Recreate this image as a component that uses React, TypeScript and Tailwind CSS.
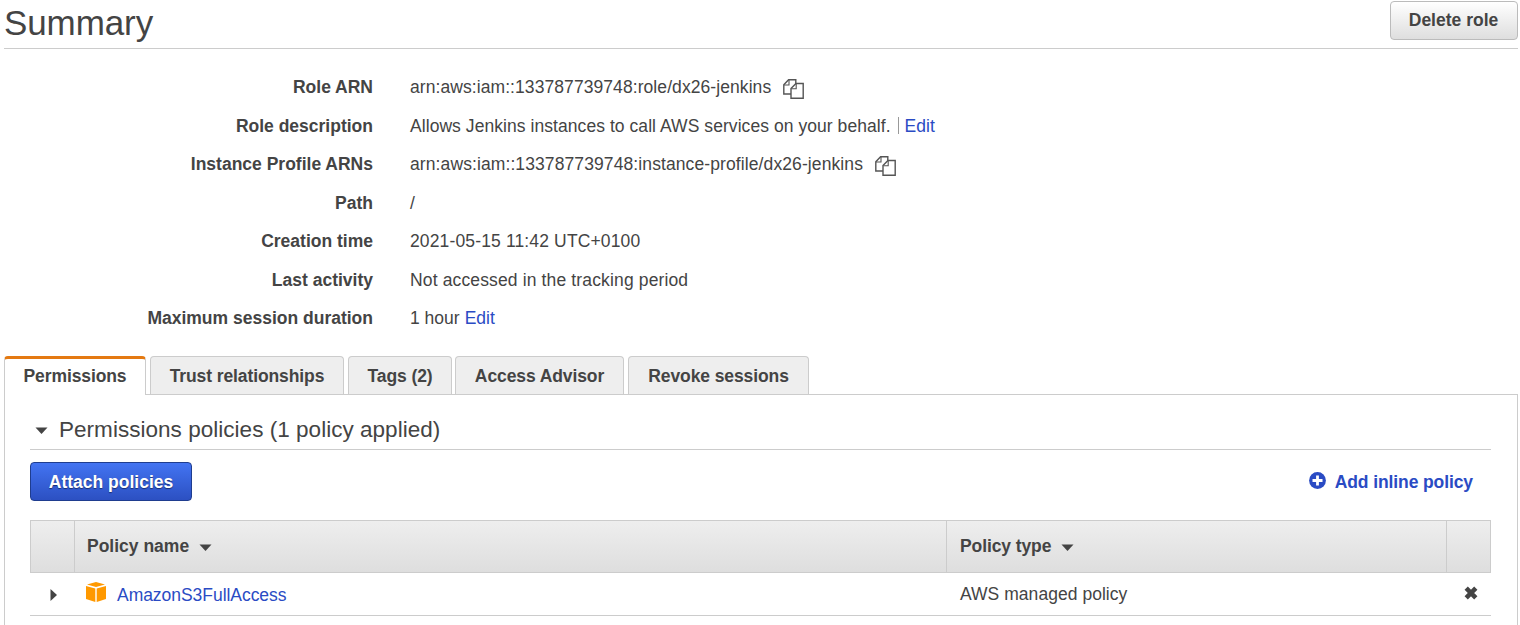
import type { ReactNode } from 'react';

const CopyIcon = () => (
  <svg width="21" height="20" viewBox="0 0 21 20" fill="white" stroke="#555" strokeWidth="1.4" className="relative top-[1.5px] ml-3 shrink-0">
    <path d="M0.8 5.8L5.6 0.8H12.8V15H0.8Z" />
    <path d="M1 6H6V1" fill="none" strokeWidth="1.1" />
    <path d="M8 9.6L13 4.5H20.2V19.2H8Z" />
    <path d="M8.2 9.8H13.2V4.8" fill="none" strokeWidth="1.1" />
  </svg>
);

const Caret = ({ className }: { className: string }) => (
  <svg width="13" height="7" viewBox="0 0 13 7" fill="#444" className={className}>
    <path d="M0.5 0.5H12.5L6.5 7Z" />
  </svg>
);

const Row = ({ label, children }: { label: string; children: ReactNode }) => (
  <div className="flex h-[38.5px] items-center">
    <dt className="w-[373px] shrink-0 text-right font-bold">{label}</dt>
    <dd className="ml-[37px] flex items-center">{children}</dd>
  </div>
);

const tabs = [
  { label: 'Trust relationships', box: 'ml-1 w-[194px]' },
  { label: 'Tags (2)', box: 'ml-1 w-[104px]' },
  { label: 'Access Advisor', box: 'ml-[3px] w-[169px]' },
  { label: 'Revoke sessions', box: 'ml-1 w-[181px]' },
];

export default function App() {
  return (
    <div className="h-[625px] w-[1520px] overflow-hidden bg-white font-['Liberation_Sans',Arial,sans-serif] text-[17.5px] leading-[22px] whitespace-nowrap text-[#444]">
      <header className="ml-1 flex h-[49px] w-[1514px] items-start justify-between border-b border-[#ccc]">
        <h1 className="text-[35px] leading-[45px] tracking-[-0.1px]">Summary</h1>
        <button className="mt-px flex h-[39px] w-[128px] items-center justify-center rounded-[4px] border border-[#bbb] bg-linear-to-b from-white to-[#dedede] pr-px pb-[2px] font-bold">
          Delete role
        </button>
      </header>

      <dl className="mt-[19px]">
        <Row label="Role ARN">
          <span className="tracking-[0.075px]">arn:aws:iam::133787739748:role/dx26-jenkins</span>
          <CopyIcon />
        </Row>
        <Row label="Role description">
          <span className="tracking-[0.06px]">Allows Jenkins instances to call AWS services on your behalf.</span>
          <span className="ml-[7px] h-[17px] w-px bg-[#999]" />
          <a className="ml-[6px] text-[#2a4bc4]">Edit</a>
        </Row>
        <Row label="Instance Profile ARNs">
          <span className="tracking-[0.1px]">arn:aws:iam::133787739748:instance-profile/dx26-jenkins</span>
          <CopyIcon />
        </Row>
        <Row label="Path"><span>/</span></Row>
        <Row label="Creation time"><span className="tracking-[0.14px]">2021-05-15 11:42 UTC+0100</span></Row>
        <Row label="Last activity"><span className="tracking-[0.14px]">Not accessed in the tracking period</span></Row>
        <Row label="Maximum session duration">
          <span>1 hour</span>
          <a className="ml-[5px] text-[#2a4bc4]">Edit</a>
        </Row>
      </dl>

      <nav className="mt-[18.5px] ml-1 flex h-[38px] font-bold tracking-[-0.1px]">
        <div className="z-10 flex h-[39px] w-[142px] items-center justify-center rounded-t-[4px] border-x border-t-[3px] border-x-[#ccc] border-t-[#e47911] bg-white pb-[2px]">
          Permissions
        </div>
        {tabs.map((t) => (
          <div key={t.label} className={`flex items-center justify-center rounded-t-[4px] border border-b-0 border-[#ccc] bg-[#eee] pt-px ${t.box}`}>
            {t.label}
          </div>
        ))}
      </nav>

      <main className="ml-1 h-[240px] w-[1514px] border border-[#ccc] pr-[26px] pl-[25px]">
        <h2 className="flex h-[55px] items-center border-b border-[#ccc] pt-[15px] text-[22.5px] tracking-[0.03px]">
          <Caret className="relative top-px ml-[5px]" />
          <span className="ml-[11px]">Permissions policies (1 policy applied)</span>
        </h2>
        <div className="mt-3 flex h-[39px] items-center justify-between">
          <button className="flex h-[39px] w-[162px] items-center justify-center rounded-[4px] border border-[#1f3d8f] bg-linear-to-b from-[#4374f2] to-[#2c50c2] font-bold text-white [text-shadow:0_1px_1px_#1a2f70]">
            Attach policies
          </button>
          <a className="mr-[18px] flex items-center font-bold tracking-[-0.1px] text-[#2a4bc4]">
            <svg width="17" height="17" viewBox="0 0 17 17" className="relative -top-px mr-[9px]">
              <circle cx="8.5" cy="8.5" r="8.4" fill="#2a4bc4" />
              <path d="M8.5 3.5V13.5M3.5 8.5H13.5" stroke="white" strokeWidth="2.8" />
            </svg>
            Add inline policy
          </a>
        </div>
        <div className="mt-[19px] grid h-[53px] w-[1461px] grid-cols-[44px_872px_500px_1fr] divide-x divide-[#ccc] border border-[#ccc] bg-linear-to-b from-[#eee] to-[#dedede] font-bold">
          <div />
          <div className="flex items-center pb-[2px] pl-3">
            <span>Policy name</span>
            <Caret className="relative top-[2px] ml-[10px]" />
          </div>
          <div className="flex items-center pb-[2px] pl-[13px] tracking-[-0.1px]">
            <span>Policy type</span>
            <Caret className="relative top-[2px] ml-[10px]" />
          </div>
          <div />
        </div>
        <div className="grid h-[43px] w-[1461px] grid-cols-[45px_872px_500px_1fr] items-center border-b border-[#ccc]">
          <svg width="7" height="12" viewBox="0 0 7 12" fill="#444" className="relative top-px ml-5"><path d="M0.5 0L7 6L0.5 12Z" /></svg>
          <div className="flex items-center pl-[11px]">
            <svg width="20" height="20" viewBox="0 0 20 20" fill="#f90" className="relative -top-[2px]">
              <path d="M10 0L19 2.4L10 5L1 2.4Z" />
              <path d="M0 4L9.3 6.5V20L0 17Z" />
              <path d="M20 4L10.7 6.5V20L20 17Z" />
            </svg>
            <a className="relative top-px ml-[11px] tracking-[-0.04px] text-[#2a4bc4]">AmazonS3FullAccess</a>
          </div>
          <span className="pl-[13px] tracking-[0.04px]">AWS managed policy</span>
          <svg width="14" height="14" viewBox="0 0 14 14" className="relative -top-px ml-[17px]">
            <path d="M2.2 2.2L11.8 11.8M11.8 2.2L2.2 11.8" stroke="#444" strokeWidth="4.6" />
          </svg>
        </div>
      </main>
    </div>
  );
}
